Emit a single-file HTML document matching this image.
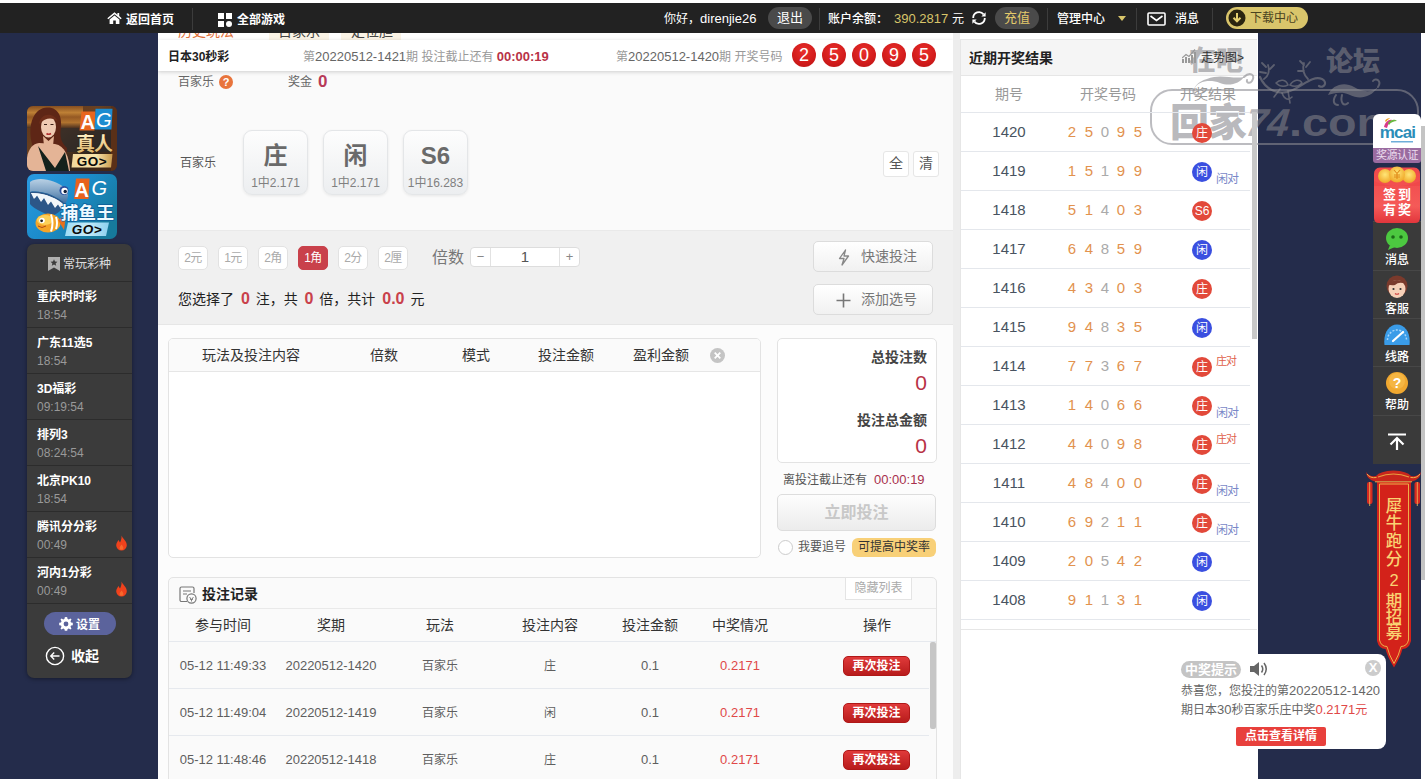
<!DOCTYPE html>
<html lang="zh-CN">
<head>
<meta charset="utf-8">
<title>日本30秒彩</title>
<style>
*{box-sizing:border-box;margin:0;padding:0}
html,body{width:1425px;height:779px;overflow:hidden}
body{background:#242c4b;font-family:"Liberation Sans","Noto Sans CJK SC",sans-serif;font-size:13px;color:#333;position:relative}
.abs{position:absolute}
#topstrip{left:0;top:0;width:1425px;height:3px;background:#fff}
#topbar{left:0;top:3px;width:1425px;height:30px;background:#222;color:#fff;font-size:13px;line-height:30px}
#topbar .t{position:absolute;top:1px;white-space:nowrap}
#topbar .sep{position:absolute;top:5px;width:1px;height:22px;background:#3c3c3c}
.pill{position:absolute;top:4px;height:22px;line-height:22px;border-radius:11px;background:#4a4a4a;text-align:center;font-size:13px}
#main{left:158px;top:33px;width:795px;height:746px;background:#fafafa;overflow:hidden}
#gap{left:953px;top:33px;width:7px;height:746px;background:#ededed}
#right{left:960px;top:33px;width:298px;height:746px;overflow:hidden}
#rightbg{left:960px;top:33px;width:298px;height:746px;background:#fff}

#main .a{position:absolute;white-space:nowrap}
#tabs{left:0;top:0;width:795px;height:8px;background:#fff;overflow:hidden}
#sticky{left:0;top:7px;width:795px;height:31px;background:#fff;box-shadow:0 1px 4px rgba(0,0,0,.18);font-size:12px;line-height:34px;z-index:5}
.ball{position:absolute;top:3px;width:24px;height:24px;border-radius:50%;background:radial-gradient(circle at 50% 35%,#e8302c 0%,#d41c1c 55%,#b81414 100%);color:#fff;font-size:18px;line-height:24px;text-align:center;font-weight:normal}
.gbtn{position:absolute;top:97px;width:65px;height:65px;border-radius:9px;border:1px solid #e4e6e8;background:linear-gradient(#fdfdfd,#eceef0);box-shadow:0 1px 3px rgba(0,0,0,.08);text-align:center;color:#666}
.gbtn b{display:block;font-size:24px;line-height:30px;margin-top:10px;font-weight:bold;color:#6a6a6a}
.gbtn i{display:block;font-style:normal;font-size:12px;line-height:14px;margin-top:5px;color:#808080}
.sq{position:absolute;top:118px;width:26px;height:26px;border:1px solid #e6e6e6;border-radius:3px;background:#fff;font-size:14px;line-height:23px;text-align:center;color:#555}
#gray{left:0;top:197px;width:795px;height:95px;background:#f0f0f0;border-top:1px solid #e9e9e9;border-bottom:1px solid #e6e6e6}
.unit{position:absolute;top:15px;width:30px;height:24px;border:1px solid #e2e2e2;border-radius:5px;background:#fff;color:#aaa;font-size:12px;line-height:22px;text-align:center;letter-spacing:-0.5px}
.unit.on{background:#c9414b;border-color:#c9414b;color:#fff}
.bbtn{position:absolute;left:655px;width:120px;height:31px;border:1px solid #dcdcdc;border-radius:5px;background:linear-gradient(#fff,#f1f1f1);color:#777;font-size:14px;line-height:29px;padding-left:47px}
#lower{left:0;top:292px;width:795px;height:454px;background:#fcfcfc}
.box{position:absolute;border:1px solid #e3e3e3;border-radius:5px;background:#fff}
.th{position:absolute;font-size:14px;color:#333;white-space:nowrap;transform:translateX(-50%)}
.td{position:absolute;font-size:13px;line-height:16px;color:#5e5e5e;white-space:nowrap;transform:translateX(-50%)}
.td.k{font-size:12px;margin-top:0}
.again{position:absolute;left:674px;width:67px;height:20px;border-radius:5px;background:linear-gradient(#e03a3a,#b81c1c);border:1px solid #b01818;color:#fff;font-size:12px;font-weight:bold;line-height:18px;text-align:center}
.n{color:#c9414b;font-size:16px;font-weight:bold;margin:0 2px 0 3px}

#right .a{position:absolute;white-space:nowrap}
.rrow{position:absolute;left:0;width:290px;height:39px;border-bottom:1px solid #e4e7ec}
.rrow .no{position:absolute;left:49px;top:9px;transform:translateX(-50%);font-size:15px;line-height:20px;color:#485360}
.rrow .d{position:absolute;top:9px;width:16px;text-align:center;font-size:15px;line-height:20px;color:#e2924e}
.rrow .d.g{color:#aaa}
.rrow .c{position:absolute;left:232px;top:10px;width:20px;height:20px;border-radius:50%;color:#fff;font-size:12px;line-height:20px;text-align:center}
.c.r{background:#e2493a}.c.b{background:#3a4fe0}
.xd{position:absolute;left:256px;top:20px;font-size:12px;line-height:14px;color:#7a88c8;letter-spacing:-1px}
.zd{position:absolute;left:256px;top:8px;font-size:11px;line-height:12px;color:#e0604a;letter-spacing:-1px}

#lmenu{left:27px;top:244px;width:105px;height:434px;background:#3b3b3b;border-radius:7px;overflow:hidden;box-shadow:0 1px 4px rgba(0,0,0,.4)}
#lmenu .a{position:absolute;white-space:nowrap}
.li{position:absolute;left:0;width:105px;height:46px;border-top:1px solid #2c2c2c}
.li b{position:absolute;left:10px;top:7px;font-size:12px;line-height:16px;color:#fff;font-weight:bold}
.li i{position:absolute;left:10px;top:25px;font-size:12px;line-height:16px;color:#999;font-style:normal}
.fire{position:absolute;left:88px;top:23px}
#rside{left:1373px;top:114px;width:48px;height:351px}
#rside .a{position:absolute;white-space:nowrap}
.rs{position:absolute;left:0;width:48px;height:49px;background:#3a3a3a;border-top:1px solid #474747;color:#fff;font-size:12px;text-align:center}
.rs span{position:absolute;left:0;width:48px;top:31px;line-height:14px;font-weight:500}
</style>
</head>
<body>
<div id="topstrip" class="abs"></div>
<div id="topbar" class="abs">
<svg class="abs" style="left:107px;top:9px" width="15" height="12" viewBox="0 0 15 12"><path d="M7.5 0.3 L0.3 6.2 L1.3 7.3 L7.5 2.3 L13.7 7.3 L14.7 6.2 L12.2 4.1 V1 H10.4 V2.7 Z" fill="#fff"/><path d="M7.5 3.4 L2.6 7.4 V12 H6.2 V8.6 H8.8 V12 H12.4 V7.4 Z" fill="#fff"/></svg>
<span class="t" style="left:126px;top:2px;font-weight:bold;font-size:12px">返回首页</span>
<div class="sep" style="left:192px"></div>
<svg class="abs" style="left:218px;top:10px" width="14" height="14" viewBox="0 0 14 14"><rect x="0" y="0" width="6" height="6" fill="#fff"/><rect x="8" y="0" width="6" height="6" fill="#fff"/><rect x="0" y="8" width="6" height="6" fill="#fff"/><circle cx="11" cy="11" r="3" fill="#fff"/></svg>
<span class="t" style="left:237px;top:2px;font-weight:bold;font-size:12px">全部游戏</span>
<span class="t" style="left:664px;font-size:12px">你好，<span style="font-size:13px">direnjie26</span></span>
<div class="pill" style="left:768px;width:44px">退出</div>
<div class="sep" style="left:819px"></div>
<span class="t" style="left:828px;font-size:12px;font-weight:500">账户余额：</span>
<span class="t" style="left:894px;font-size:13px;color:#d8c56a">390.2817</span>
<span class="t" style="left:952px;font-size:12px">元</span>
<svg class="abs" style="left:971px;top:7px" width="16" height="16" viewBox="0 0 16 16"><path d="M2.2 8 A5.8 5.8 0 0 1 12.6 4.4" fill="none" stroke="#fff" stroke-width="1.8"/><path d="M13.8 8 A5.8 5.8 0 0 1 3.4 11.6" fill="none" stroke="#fff" stroke-width="1.8"/><path d="M14.6 2.2 V6.4 H10.4 Z" fill="#fff"/><path d="M1.4 13.8 V9.6 H5.6 Z" fill="#fff"/></svg>
<div class="pill" style="left:995px;width:44px;color:#e4c96a">充值</div>
<div class="sep" style="left:1047px"></div>
<span class="t" style="left:1057px;font-size:12px;font-weight:500">管理中心</span>
<div class="abs" style="left:1118px;top:13px;width:0;height:0;border-left:4px solid transparent;border-right:4px solid transparent;border-top:5px solid #d8c56a"></div>
<div class="sep" style="left:1136px"></div>
<svg class="abs" style="left:1147px;top:9px" width="19" height="14" viewBox="0 0 19 14"><rect x="1" y="1" width="17" height="12" rx="1" fill="none" stroke="#fff" stroke-width="1.6"/><path d="M3.5 4 L9.5 8.5 L15.5 4" fill="none" stroke="#fff" stroke-width="1.6"/></svg>
<span class="t" style="left:1175px;font-size:12px;font-weight:500">消息</span>
<div class="sep" style="left:1212px"></div>
<div class="pill" style="left:1226px;width:82px;top:4px;height:22px;line-height:22px;border-radius:11px;background:#d9c56b;color:#4a4320;font-size:12px;text-align:left;padding-left:24px">下载中心</div>
<svg class="abs" style="left:1228px;top:6px" width="18" height="18" viewBox="0 0 18 18"><circle cx="9" cy="9" r="8.5" fill="#2a2410"/><path d="M9 4 V12 M5.5 8.8 L9 12.3 L12.5 8.8" fill="none" stroke="#e4cf70" stroke-width="2"/></svg>
</div>
<div id="main" class="abs">
<div id="tabs" class="a">
 <span class="a" style="left:20px;top:-10px;font-size:14px;line-height:16px;color:#e0703a">历史玩法</span>
 <div class="a" style="left:111px;top:-12px;width:60px;height:19px;background:#fbf4e6"></div>
 <span class="a" style="left:120px;top:-10px;font-size:14px;line-height:16px;color:#444">百家乐</span>
 <div class="a" style="left:183px;top:-12px;width:60px;height:19px;background:#fbf4e6"></div>
 <span class="a" style="left:193px;top:-10px;font-size:14px;line-height:16px;color:#444">定位胆</span>
</div>
<div id="sticky" class="a">
 <span class="a" style="left:10px;font-weight:bold;color:#222">日本30秒彩</span>
 <span class="a" style="left:145px;color:#999">第<span style="color:#666;font-size:13px">20220512-1421</span>期 投注截止还有 <b style="color:#b83246;font-size:13px">00:00:19</b></span>
 <span class="a" style="left:458px;color:#999">第<span style="color:#666;font-size:13px">20220512-1420</span>期 开奖号码</span>
 <div class="ball" style="left:634px">2</div><div class="ball" style="left:664px">5</div><div class="ball" style="left:694px">0</div><div class="ball" style="left:724px">9</div><div class="ball" style="left:754px">5</div>
</div>
<span class="a" style="left:20px;top:41px;font-size:12px;line-height:16px;color:#666">百家乐</span>
<div class="a" style="left:61px;top:42px;width:14px;height:14px;border-radius:50%;background:#e8743c;color:#fff;font-size:11px;font-weight:bold;line-height:14px;text-align:center">?</div>
<span class="a" style="left:130px;top:41px;font-size:12px;line-height:16px;color:#666">奖金</span>
<span class="a" style="left:160px;top:39px;font-size:17px;line-height:20px;font-weight:bold;color:#b83a58">0</span>
<span class="a" style="left:22px;top:122px;font-size:12px;line-height:16px;color:#555">百家乐</span>
<div class="gbtn" style="left:85px"><b>庄</b><i>1中2.171</i></div>
<div class="gbtn" style="left:165px"><b>闲</b><i>1中2.171</i></div>
<div class="gbtn" style="left:245px"><b>S6</b><i>1中16.283</i></div>
<div class="sq" style="left:725px">全</div><div class="sq" style="left:755px">清</div>
<div id="gray" class="a">
 <div class="unit" style="left:20px">2元</div><div class="unit" style="left:60px">1元</div><div class="unit" style="left:100px">2角</div><div class="unit on" style="left:140px">1角</div><div class="unit" style="left:180px">2分</div><div class="unit" style="left:220px">2厘</div>
 <span class="a" style="left:274px;top:16px;font-size:16px;line-height:22px;color:#777">倍数</span>
 <div class="a" style="left:312px;top:16px;width:110px;height:20px;border:1px solid #ddd;border-radius:4px;background:#fff;font-size:13px;line-height:18px;color:#555">
   <span class="a" style="left:0;width:20px;text-align:center;border-right:1px solid #e2e2e2;color:#888">−</span>
   <span class="a" style="left:20px;width:68px;text-align:center;font-size:15px">1</span>
   <span class="a" style="left:88px;width:20px;text-align:center;border-left:1px solid #e2e2e2;color:#888">+</span>
 </div>
 <span class="a" style="left:20px;top:58px;font-size:14px;line-height:20px;color:#222">您选择了 <b class="n">0</b> 注，共 <b class="n">0</b> 倍，共计 <b class="n">0.0</b> 元</span>
 <div class="bbtn" style="top:10px">快速投注<svg style="position:absolute;left:23px;top:7px" width="14" height="17" viewBox="0 0 14 17"><path d="M8.5 1 L2.5 9.5 H7 L5 16 L11.5 7 H7 Z" fill="none" stroke="#888" stroke-width="1.3" stroke-linejoin="round"/></svg></div>
 <div class="bbtn" style="top:53px">添加选号<svg style="position:absolute;left:22px;top:8px" width="15" height="15" viewBox="0 0 15 15"><path d="M7.5 0.5 V14.5 M0.5 7.5 H14.5" stroke="#777" stroke-width="1.6"/></svg></div>
</div>
<div id="lower" class="a">
 <div class="box" style="left:10px;top:13px;width:593px;height:220px;overflow:hidden">
   <div class="a" style="left:0;top:0;width:593px;height:33px;background:#fafafa;border-bottom:1px solid #e6e6e6"></div>
   <span class="th" style="left:82px;top:5px">玩法及投注内容</span>
   <span class="th" style="left:215px;top:5px">倍数</span>
   <span class="th" style="left:307px;top:5px">模式</span>
   <span class="th" style="left:397px;top:5px">投注金额</span>
   <span class="th" style="left:492px;top:5px">盈利金额</span>
   <svg class="a" style="left:541px;top:9px" width="15" height="15" viewBox="0 0 15 15"><circle cx="7.5" cy="7.5" r="7.5" fill="#c4c4c4"/><path d="M4.7 4.7 L10.3 10.3 M10.3 4.7 L4.7 10.3" stroke="#fff" stroke-width="1.8"/></svg>
 </div>
 <div class="box" style="left:619px;top:13px;width:160px;height:125px">
   <span class="a" style="right:9px;top:8px;font-size:14px;font-weight:bold;color:#444;line-height:20px">总投注数</span>
   <span class="a" style="right:9px;top:32px;font-size:21px;color:#b83246;line-height:24px;font-weight:300">0</span>
   <span class="a" style="right:9px;top:71px;font-size:14px;font-weight:bold;color:#444;line-height:20px">投注总金额</span>
   <span class="a" style="right:9px;top:95px;font-size:21px;color:#b83246;line-height:24px;font-weight:300">0</span>
 </div>
 <span class="a" style="left:625px;top:147px;font-size:12px;line-height:16px;color:#555">离投注截止还有</span>
 <span class="a" style="left:716px;top:147px;font-size:13px;line-height:16px;color:#a8304c">00:00:19</span>
 <div class="a" style="left:619px;top:169px;width:159px;height:37px;border:1px solid #ddd;border-radius:5px;background:linear-gradient(#fdfdfd,#ececec);text-align:center;font-size:16px;font-weight:bold;color:#c8c8c8;line-height:35px">立即投注</div>
 <div class="a" style="left:620px;top:215px;width:15px;height:15px;border-radius:50%;border:1px solid #ccc;background:#fff"></div>
 <span class="a" style="left:640px;top:214px;font-size:12px;line-height:16px;color:#555">我要追号</span>
 <div class="a" style="left:694px;top:213px;width:84px;height:19px;border-radius:6px;background:#f8d078;font-size:12px;line-height:19px;text-align:center;color:#333">可提高中奖率</div>

 <div class="box" style="left:10px;top:252px;width:769px;height:220px;background:#fafafa;border-radius:5px 5px 0 0">
   <svg class="a" style="left:10px;top:8px" width="18" height="18" viewBox="0 0 18 18"><path d="M8 15.5 H2.5 A1.5 1.5 0 0 1 1 14 V2.5 A1.5 1.5 0 0 1 2.5 1 H13.5 A1.5 1.5 0 0 1 15 2.5 V7" fill="none" stroke="#777" stroke-width="1.2"/><path d="M4 5 H12 M4 8 H8" stroke="#777" stroke-width="1.2"/><circle cx="12.5" cy="12.5" r="4.6" fill="#fafafa" stroke="#777" stroke-width="1.2"/><path d="M10.6 11 L12.5 14 L14.4 11 M12.5 13.5 V15.5 M11 13.3 H14" stroke="#777" stroke-width="0.9" fill="none"/></svg>
   <span class="a" style="left:33px;top:6px;font-size:14px;font-weight:bold;color:#222;line-height:20px">投注记录</span>
   <div class="a" style="left:676px;top:-1px;width:67px;height:23px;border:1px solid #e4e4e4;background:#fff;font-size:12px;color:#aaa;text-align:center;line-height:21px">隐藏列表</div>
   <div class="a" style="left:0;top:30px;width:767px;height:1px;background:#e9e9e9"></div>
   <span class="th" style="left:54px;top:36px">参与时间</span>
   <span class="th" style="left:162px;top:36px">奖期</span>
   <span class="th" style="left:271px;top:36px">玩法</span>
   <span class="th" style="left:381px;top:36px">投注内容</span>
   <span class="th" style="left:481px;top:36px">投注金额</span>
   <span class="th" style="left:571px;top:36px">中奖情况</span>
   <span class="th" style="left:708px;top:36px">操作</span>
   <div class="a" style="left:0;top:63px;width:767px;height:1px;background:#e6e9ee"></div>
   <div class="a" style="left:0;top:110px;width:760px;height:1px;background:#e6e9ee"></div>
   <div class="a" style="left:0;top:157px;width:760px;height:1px;background:#e6e9ee"></div>
   <div class="a" style="left:761px;top:64px;width:6px;height:87px;background:#c6c6c6;border-radius:2px"></div>

   <span class="td" style="left:54px;top:80px">05-12 11:49:33</span><span class="td" style="left:162px;top:80px">20220512-1420</span><span class="td k" style="left:271px;top:80px">百家乐</span><span class="td k" style="left:381px;top:80px">庄</span><span class="td" style="left:481px;top:80px">0.1</span><span class="td" style="left:571px;top:80px;color:#e04848">0.2171</span><div class="again" style="top:78px">再次投注</div>
   <span class="td" style="left:54px;top:127px">05-12 11:49:04</span><span class="td" style="left:162px;top:127px">20220512-1419</span><span class="td k" style="left:271px;top:127px">百家乐</span><span class="td k" style="left:381px;top:127px">闲</span><span class="td" style="left:481px;top:127px">0.1</span><span class="td" style="left:571px;top:127px;color:#e04848">0.2171</span><div class="again" style="top:125px">再次投注</div>
   <span class="td" style="left:54px;top:174px">05-12 11:48:46</span><span class="td" style="left:162px;top:174px">20220512-1418</span><span class="td k" style="left:271px;top:174px">百家乐</span><span class="td k" style="left:381px;top:174px">庄</span><span class="td" style="left:481px;top:174px">0.1</span><span class="td" style="left:571px;top:174px;color:#e04848">0.2171</span><div class="again" style="top:172px">再次投注</div>
 </div>
</div>
</div>

<svg class="abs" id="ag1" style="left:27px;top:106px" width="90" height="65" viewBox="0 0 90 65">
 <defs>
  <linearGradient id="bg1" x1="0" y1="0" x2="1" y2="1"><stop offset="0" stop-color="#5a3418"/><stop offset=".4" stop-color="#6a4020"/><stop offset=".7" stop-color="#32261c"/><stop offset="1" stop-color="#4a2a16"/></linearGradient>
  <linearGradient id="gold" x1="0" y1="0" x2="0" y2="1"><stop offset="0" stop-color="#fff4cc"/><stop offset="1" stop-color="#dcb060"/></linearGradient>
  <linearGradient id="goldbar" x1="0" y1="0" x2="1" y2="0"><stop offset="0" stop-color="#f2d89c"/><stop offset=".6" stop-color="#f8e4ac"/><stop offset="1" stop-color="#c89a4c"/></linearGradient>
  <linearGradient id="band" x1="0" y1="0" x2="0" y2="1"><stop offset="0" stop-color="#8a5020"/><stop offset=".3" stop-color="#c88838"/><stop offset=".5" stop-color="#9a5c24"/><stop offset=".75" stop-color="#b87830"/><stop offset="1" stop-color="#4a3020"/></linearGradient>
  <clipPath id="cp1"><rect width="90" height="65" rx="6"/></clipPath>
 </defs>
 <g clip-path="url(#cp1)">
  <rect width="90" height="65" fill="url(#bg1)"/>
  <rect x="0" y="0" width="56" height="22" fill="url(#band)" opacity=".9"/>
  <rect x="30" y="22" width="60" height="24" fill="#2c2a2a" opacity=".75"/>
  <rect x="84" y="0" width="6" height="65" fill="#5a3018"/>
  <path d="M5 38 C0 16 8 2 20 1.500 C32 1 36 12 33.500 26 C33 34 36 38 40 42 L38 65 H0 C2 52 6 46 5 38 Z" fill="#5e2616"/>
  <path d="M0 65 C-2 46 4 38 12 37 L28 38 C38 40 42 50 43 65 Z" fill="#e4b496"/>
  <ellipse cx="21.500" cy="21" rx="7.500" ry="10.500" fill="#efcab2"/>
  <path d="M12 18 C13 7 27 5 31 16 C27 12 20 10 12 18 Z" fill="#6e2e1a"/>
  <path d="M16 30 L21.500 35 L27 30 L26 40 H17 Z" fill="#e4b496"/>
  <path d="M11 40 L19 65 H42 L38 46 L28 62 Z" fill="#14221c"/>
  <path d="M19.500 27.500 Q21.500 29 24 27.500" stroke="#b03030" stroke-width="1.600" fill="none"/>
  <path d="M17 18.500 H20 M23.500 18.500 H26.500" stroke="#3a2018" stroke-width="1.200"/>
  <path d="M54.500 5.500 H68.500 L67.500 24.500 H52.500 Z" fill="#e8661e"/><path d="M68.500 2.700 H85.500 L84.500 23.500 H67.500 Z" fill="#1c8cd0"/>
  <g font-family="Liberation Sans, sans-serif" font-weight="bold" font-size="20" fill="#fff"><text x="53.500" y="22.500">A</text><text x="69" y="21" font-style="italic" font-weight="normal">G</text></g>
  <text x="67" y="44.500" font-family="Liberation Sans, Noto Sans CJK SC, sans-serif" font-weight="bold" font-size="19" fill="url(#gold)" stroke="#2a1808" stroke-width=".8" text-anchor="middle" paint-order="stroke" letter-spacing="-1">真人</text>
  <path d="M46 48 H85.500 L84 61.500 H44.500 Z" fill="url(#goldbar)"/>
  <text x="65" y="59.500" font-family="Liberation Sans, sans-serif" font-weight="bold" font-size="13.500" fill="#0a0a0a" text-anchor="middle" letter-spacing=".5">GO&gt;</text>
 </g>
</svg>
<svg class="abs" id="ag2" style="left:27px;top:174px" width="90" height="65" viewBox="0 0 90 65">
 <defs>
  <linearGradient id="bg2" x1="0" y1="0" x2="1" y2=".6"><stop offset="0" stop-color="#2a9ae0"/><stop offset=".5" stop-color="#1c8ccc"/><stop offset="1" stop-color="#167a9c"/></linearGradient>
  <linearGradient id="bluebar" x1="0" y1="0" x2="1" y2="0"><stop offset="0" stop-color="#a0dcf4"/><stop offset=".5" stop-color="#c4ecfa"/><stop offset="1" stop-color="#8cd0ee"/></linearGradient>
  <linearGradient id="shark" x1="0" y1="0" x2="0" y2="1"><stop offset="0" stop-color="#b8d0e4"/><stop offset=".5" stop-color="#7ea2c4"/><stop offset="1" stop-color="#3a6a9c"/></linearGradient>
  <clipPath id="cp2"><rect width="90" height="65" rx="7"/></clipPath>
 </defs>
 <g clip-path="url(#cp2)">
  <rect width="90" height="65" fill="url(#bg2)"/>
  <path d="M3 8 C12 2 28 6 38 14 C42 18 42 24 38 30 C30 22 14 16 3 18 Z" fill="url(#shark)"/>
  <path d="M3 18 C14 16 30 22 38 30 C36 36 30 40 24 42 C14 38 6 34 3 30 Z" fill="#2c5688"/>
  <path d="M4 19 L8 24 L11 20 L15 26 L18 22 L22 29 L25 25 L29 32 L32 28 L35 33 L37 30 L37 31 C30 24 15 18 4 20 Z" fill="#eef4f8"/>
  <path d="M4 19 L7 25 L10 21.500 L14 28 L17 24 L21 31 L24 27.500 L28 34 L31 30.500 L34 35 L37 31 C30 24 15 18 4 19 Z" fill="#f2f6fa"/>
  <circle cx="37" cy="16.500" r="4.500" fill="#2a50a0"/><circle cx="37.500" cy="17" r="3.200" fill="#fff"/><circle cx="38.200" cy="17.500" r="1.700" fill="#14203a"/>
  <ellipse cx="21" cy="49" rx="12.500" ry="9.500" fill="#f4a428"/>
  <ellipse cx="18" cy="46" rx="8" ry="5" fill="#fcd058"/>
  <path d="M31 46 L39 41 L37 56 Z" fill="#e8701c"/>
  <path d="M24 40.500 Q27 49 24 57.500 M29 43 Q31 49 29 55" stroke="#fff" stroke-width="2" fill="none"/>
  <circle cx="15" cy="46.500" r="2.800" fill="#fff"/><circle cx="14.600" cy="46.800" r="1.400" fill="#222"/>
  <path d="M11 52 Q15 55 19 52" stroke="#b04818" stroke-width="1" fill="none"/>
  <path d="M49 4.500 H62.500 L61.500 25 H47 Z" fill="#e8621c"/>
  <g font-family="Liberation Sans, sans-serif" font-size="20" fill="#fff"><text x="47.500" y="23" font-weight="bold">A</text><text x="64.500" y="20.500" font-style="italic">G</text></g>
  <text x="60.500" y="45" font-family="Liberation Sans, Noto Sans CJK SC, sans-serif" font-weight="bold" font-size="17.500" fill="#eefaff" stroke="#0c5c98" stroke-width="1.400" text-anchor="middle" paint-order="stroke" letter-spacing=".3">捕鱼王</text>
  <path d="M41 48.500 H82 L79 62 H38 Z" fill="url(#bluebar)"/>
  <text x="60" y="60" font-family="Liberation Sans, sans-serif" font-weight="bold" font-style="italic" font-size="13.500" fill="#0a0a0a" text-anchor="middle" letter-spacing=".5">GO&gt;</text>
 </g>
</svg>
<div class="abs" id="lmenu">
 <svg class="a" style="left:21px;top:13px" width="12" height="14" viewBox="0 0 12 14"><path d="M0 0 H12 V14 L6 10.5 L0 14 Z" fill="#b0b0b0"/><path d="M6 2.2 L7 4.6 L9.4 4.8 L7.6 6.4 L8.2 8.8 L6 7.5 L3.8 8.8 L4.4 6.4 L2.6 4.8 L5 4.6 Z" fill="#3b3b3b"/></svg>
 <span class="a" style="left:36px;top:11px;font-size:12px;line-height:18px;color:#ddd">常玩彩种</span>
<div class="li" style="top:37px"><b>重庆时时彩</b><i>18:54</i></div>
<div class="li" style="top:83px"><b>广东11选5</b><i>18:54</i></div>
<div class="li" style="top:129px"><b>3D福彩</b><i>09:19:54</i></div>
<div class="li" style="top:175px"><b>排列3</b><i>08:24:54</i></div>
<div class="li" style="top:221px"><b>北京PK10</b><i>18:54</i></div>
<div class="li" style="top:267px"><b>腾讯分分彩</b><i>00:49</i><svg class="fire" width="13" height="16" viewBox="0 0 13 16"><path d="M6.5 0.5 C7.5 3.5 11.8 6 11.8 10.2 A5.3 5.3 0 0 1 1.2 10.2 C1.2 8 2.6 6.8 3.4 5 C4.2 6.2 4.6 6.8 5 7.6 C6 5.4 6.8 3.2 6.5 0.5 Z" fill="#f0421c"/><path d="M6.5 9.5 C7.2 10.8 8.4 11.4 8.4 12.9 A1.9 1.9 0 0 1 4.6 12.9 C4.6 11.700 5.800 11 6.500 9.500 Z" fill="#f8682c"/></svg></div>
<div class="li" style="top:313px"><b>河内1分彩</b><i>00:49</i><svg class="fire" width="13" height="16" viewBox="0 0 13 16"><path d="M6.5 0.5 C7.5 3.5 11.8 6 11.8 10.2 A5.3 5.3 0 0 1 1.2 10.2 C1.2 8 2.6 6.8 3.4 5 C4.2 6.2 4.6 6.8 5 7.6 C6 5.4 6.8 3.2 6.5 0.5 Z" fill="#f0421c"/><path d="M6.5 9.5 C7.2 10.8 8.4 11.4 8.4 12.9 A1.9 1.9 0 0 1 4.6 12.9 C4.6 11.700 5.800 11 6.500 9.500 Z" fill="#f8682c"/></svg></div>

 <div class="a" style="left:0;top:359px;width:105px;height:1px;background:#2c2c2c"></div>
 <div class="a" style="left:17px;top:368px;width:72px;height:23px;border-radius:12px;background:#5b639c;color:#fff;font-size:12px;font-weight:bold;line-height:26px;padding-left:32px;overflow:hidden">设置</div>
 <svg class="a" style="left:32px;top:373px" width="14" height="14" viewBox="0 0 14 14"><path d="M7 0 L8.2 0.2 L8.6 2 L9.8 2.5 L11.4 1.5 L12.5 2.6 L11.5 4.2 L12 5.4 L13.8 5.8 V8.2 L12 8.6 L11.5 9.8 L12.5 11.4 L11.4 12.5 L9.8 11.5 L8.6 12 L8.2 13.8 H5.8 L5.4 12 L4.2 11.5 L2.6 12.5 L1.5 11.4 L2.5 9.8 L2 8.6 L0.2 8.2 V5.8 L2 5.4 L2.5 4.2 L1.5 2.6 L2.6 1.5 L4.2 2.5 L5.4 2 L5.8 0.2 Z" fill="#fff"/><circle cx="7" cy="7" r="2.4" fill="#5b639c"/></svg>
 <svg class="a" style="left:18px;top:402px" width="20" height="20" viewBox="0 0 20 20"><circle cx="10" cy="10" r="8.6" fill="none" stroke="#fff" stroke-width="1.4"/><path d="M14.5 10 H6 M9.2 6.6 L5.8 10 L9.2 13.4" fill="none" stroke="#fff" stroke-width="1.4"/></svg>
 <span class="a" style="left:44px;top:402px;font-size:14px;font-weight:bold;line-height:20px;color:#fff">收起</span>
</div>
<div id="gap" class="abs"></div>
<div id="rightbg" class="abs"><div class="abs" style="left:0;top:6px;width:297px;height:37px;background:#f5f5f5;border-top:1px solid #e6e6e6;border-bottom:1px solid #e6e6e6;border-left:1px solid #e6e6e6"></div></div>
<div class="abs" id="wm" style="left:1150px;top:40px;width:271px;height:110px;pointer-events:none;color:rgba(132,132,138,.58);font-weight:900;overflow:hidden">
 <span class="abs" style="left:39px;top:5px;font-size:27px;line-height:32px;white-space:nowrap">在吧</span>
 <span class="abs" style="left:176px;top:6px;font-size:27px;line-height:32px;white-space:nowrap">论坛</span>
 <svg class="abs" style="left:40px;top:17px" width="230" height="60" viewBox="0 0 230 60" fill="none" stroke="rgba(132,132,138,.58)" stroke-linecap="round" stroke-linejoin="round">
  <path d="M4 32 C8 24 20 22 30 26 C40 30 50 26 54 20 C44 22 34 18 24 20 C14 22 6 26 4 32 Z" fill="rgba(132,132,138,.58)" stroke="none"/>
  <path d="M54 20 C60 14 66 18 62 24 C60 27 56 26 57 23 M4 32 C2 36 6 40 9 37" stroke-width="2"/>
  <path d="M70 20 C76 34 90 38 100 34 C112 30 122 18 132 22 C138 25 134 32 129 29" stroke-width="2.200"/>
  <path d="M78 8 C80 14 78 20 74 22 M76 10 L72 6 M80 12 L84 8 M76 16 L70 15" stroke-width="1.800"/>
  <path d="M114 6 C112 12 114 18 118 22 M114 8 L110 4 M116 10 L120 5 M114 14 L108 14" stroke-width="1.800"/>
  <path d="M86 26 C90 22 96 22 98 28 C94 30 90 30 86 26 Z M100 28 C104 22 110 22 112 26 C108 30 104 30 100 28 Z M92 36 C94 42 98 44 102 40 M98 34 L100 46 M90 32 L84 40" stroke-width="1.600"/>
  <path d="M138 38 C142 28 154 24 164 30 C172 35 182 36 188 30 C180 42 168 42 160 38 C152 34 144 36 138 38 Z" fill="rgba(132,132,138,.58)" stroke="none"/>
  <path d="M188 30 C192 24 186 20 183 24 M152 38 C150 46 154 50 158 46 M146 38 C142 44 144 48 148 48" stroke-width="2"/>
 </svg>
 <div class="abs" style="left:0;top:49px;width:269px;height:56px;border:2px solid rgba(140,140,146,.58);border-radius:22px"></div>
 <span class="abs" style="left:20px;top:60px;font-size:39px;line-height:46px;white-space:nowrap;letter-spacing:-1px">回家<i style="letter-spacing:0;display:inline-block;transform:skewX(-6deg)">74</i><span style="display:inline-block;transform:scaleX(1.2);transform-origin:0 50%;letter-spacing:0">.com</span></span>
</div>
<div id="right" class="abs">
<span class="a" style="left:9px;top:15px;font-size:14px;font-weight:bold;color:#222;line-height:20px">近期开奖结果</span>
<svg class="a" style="left:222px;top:16px" width="18" height="14" viewBox="0 0 18 14"><path d="M0 14 V10 H2 V14 M3 14 V8 H5 V14 M6 14 V9 H8 V14 M9 14 V6 H11 V14 M12 14 V3 H14 V14" fill="#999"/><path d="M0 9 L4 5.500 L7 7.500 L13 0.500" stroke="#999" stroke-width="1.200" fill="none"/></svg>
<span class="a" style="left:241px;top:15px;font-size:12px;color:#333;line-height:20px">走势图&gt;</span>
<span class="a" style="left:49px;top:51px;transform:translateX(-50%);font-size:14px;color:#999;line-height:20px">期号</span>
<span class="a" style="left:148px;top:51px;transform:translateX(-50%);font-size:14px;color:#999;line-height:20px">开奖号码</span>
<span class="a" style="left:248px;top:51px;transform:translateX(-50%);font-size:14px;color:#999;line-height:20px">开奖结果</span>
<div class="a" style="left:0;top:79px;width:290px;height:1px;background:#e4e7ec"></div>
<div class="rrow" style="top:80px"><span class="no">1420</span><span class="d" style="left:104px">2</span><span class="d" style="left:121px">5</span><span class="d g" style="left:137px">0</span><span class="d" style="left:153px">9</span><span class="d" style="left:170px">5</span><span class="c r">庄</span></div>
<div class="rrow" style="top:119px"><span class="no">1419</span><span class="d" style="left:104px">1</span><span class="d" style="left:121px">5</span><span class="d g" style="left:137px">1</span><span class="d" style="left:153px">9</span><span class="d" style="left:170px">9</span><span class="c b">闲</span><span class="xd">闲对</span></div>
<div class="rrow" style="top:158px"><span class="no">1418</span><span class="d" style="left:104px">5</span><span class="d" style="left:121px">1</span><span class="d g" style="left:137px">4</span><span class="d" style="left:153px">0</span><span class="d" style="left:170px">3</span><span class="c r">S6</span></div>
<div class="rrow" style="top:197px"><span class="no">1417</span><span class="d" style="left:104px">6</span><span class="d" style="left:121px">4</span><span class="d g" style="left:137px">8</span><span class="d" style="left:153px">5</span><span class="d" style="left:170px">9</span><span class="c b">闲</span></div>
<div class="rrow" style="top:236px"><span class="no">1416</span><span class="d" style="left:104px">4</span><span class="d" style="left:121px">3</span><span class="d g" style="left:137px">4</span><span class="d" style="left:153px">0</span><span class="d" style="left:170px">3</span><span class="c r">庄</span></div>
<div class="rrow" style="top:275px"><span class="no">1415</span><span class="d" style="left:104px">9</span><span class="d" style="left:121px">4</span><span class="d g" style="left:137px">8</span><span class="d" style="left:153px">3</span><span class="d" style="left:170px">5</span><span class="c b">闲</span></div>
<div class="rrow" style="top:314px"><span class="no">1414</span><span class="d" style="left:104px">7</span><span class="d" style="left:121px">7</span><span class="d g" style="left:137px">3</span><span class="d" style="left:153px">6</span><span class="d" style="left:170px">7</span><span class="c r">庄</span><span class="zd">庄对</span></div>
<div class="rrow" style="top:353px"><span class="no">1413</span><span class="d" style="left:104px">1</span><span class="d" style="left:121px">4</span><span class="d g" style="left:137px">0</span><span class="d" style="left:153px">6</span><span class="d" style="left:170px">6</span><span class="c r">庄</span><span class="xd">闲对</span></div>
<div class="rrow" style="top:392px"><span class="no">1412</span><span class="d" style="left:104px">4</span><span class="d" style="left:121px">4</span><span class="d g" style="left:137px">0</span><span class="d" style="left:153px">9</span><span class="d" style="left:170px">8</span><span class="c r">庄</span><span class="zd">庄对</span></div>
<div class="rrow" style="top:431px"><span class="no">1411</span><span class="d" style="left:104px">4</span><span class="d" style="left:121px">8</span><span class="d g" style="left:137px">4</span><span class="d" style="left:153px">0</span><span class="d" style="left:170px">0</span><span class="c r">庄</span><span class="xd">闲对</span></div>
<div class="rrow" style="top:470px"><span class="no">1410</span><span class="d" style="left:104px">6</span><span class="d" style="left:121px">9</span><span class="d g" style="left:137px">2</span><span class="d" style="left:153px">1</span><span class="d" style="left:170px">1</span><span class="c r">庄</span><span class="xd">闲对</span></div>
<div class="rrow" style="top:509px"><span class="no">1409</span><span class="d" style="left:104px">2</span><span class="d" style="left:121px">0</span><span class="d g" style="left:137px">5</span><span class="d" style="left:153px">4</span><span class="d" style="left:170px">2</span><span class="c b">闲</span></div>
<div class="rrow" style="top:548px"><span class="no">1408</span><span class="d" style="left:104px">9</span><span class="d" style="left:121px">1</span><span class="d g" style="left:137px">1</span><span class="d" style="left:153px">3</span><span class="d" style="left:170px">1</span><span class="c b">闲</span></div>

<div class="a" style="left:0;top:596px;width:297px;height:1px;background:#e6e6e6"></div>
<div class="a" style="left:292px;top:79px;width:5px;height:227px;background:#c8c8c8"></div>
<div class="a" style="left:0;top:6px;width:1px;height:740px;background:#e6e6e6"></div>
</div>

<div class="abs" id="rside">
 <div class="a" style="left:0;top:0;width:48px;height:34px;background:#fff;border-radius:6px 6px 0 0"></div>
 <svg class="a" style="left:0;top:0" width="48" height="34" viewBox="0 0 48 34"><path d="M11 13 C12 8 16 5 19 6 C17 8 15 10 14 14 Z" fill="#d83a8a"/><path d="M15 9 C18 5 22 5 24 7 C21 7 18 8 16 11 Z" fill="#6ab840"/><path d="M12 7 C13 5 15 4 17 4.500 C15 5.500 14 6.500 13 8 Z" fill="#f0a020"/><text x="24.500" y="24" font-family="Liberation Sans, sans-serif" font-weight="bold" font-size="17" fill="#2b8db8" text-anchor="middle" letter-spacing="-.8">mcai</text><rect x="18" y="27" width="22" height="1.500" fill="#4a9ad0" opacity=".8"/></svg>
 <div class="a" style="left:0;top:34px;width:48px;height:15px;background:#9a6ca0;color:#ecdcee;font-size:11px;line-height:15px;text-align:center;letter-spacing:-0.5px;border-radius:0 0 3px 3px">奖源认证</div>
 <svg class="a" style="left:0;top:50px;z-index:2" width="48" height="60" viewBox="0 0 48 60">
  <defs><linearGradient id="env" x1="0" y1="0" x2="0" y2="1"><stop offset="0" stop-color="#f0484a"/><stop offset=".7" stop-color="#f55a58"/><stop offset="1" stop-color="#e2363c"/></linearGradient>
  <radialGradient id="coin" cx=".5" cy=".4" r=".6"><stop offset="0" stop-color="#ffe678"/><stop offset="1" stop-color="#f0a828"/></radialGradient></defs>
  <path d="M1 10 Q1 4 7 3.500 L41 3.500 Q47 4 47 10 V54 Q47 59 42 59 H6 Q1 59 1 54 Z" fill="url(#env)"/>
  <circle cx="12" cy="12" r="7" fill="url(#coin)"/><circle cx="36" cy="12" r="7" fill="url(#coin)"/><circle cx="24" cy="10.500" r="8" fill="url(#coin)"/>
  <path d="M21 6 L24 9.500 L27 6 M24 9.500 V15 M21 11 H27 M21 13 H27" stroke="#e08a18" stroke-width="1.100" fill="none"/>
  <path d="M1 17 Q24 27 47 17 V22 H1 Z" fill="#f0484a"/>
 </svg>
 <span class="a" style="left:1px;top:74px;z-index:3;width:48px;text-align:center;font-size:13px;line-height:14.500px;color:#fff;font-weight:bold;white-space:normal;letter-spacing:2px">签到<br>有奖</span>
 <div class="rs" style="top:107px"><svg style="position:absolute;left:12px;top:5px" width="24" height="24" viewBox="0 0 24 24"><ellipse cx="12" cy="11" rx="11" ry="10" fill="#4cc840"/><path d="M5 18 L3 23 L10 20 Z" fill="#4cc840"/><circle cx="8" cy="10" r="1.8" fill="#1c6a18"/><circle cx="16" cy="10" r="1.8" fill="#1c6a18"/></svg><span>消息</span></div>
 <div class="rs" style="top:156px"><svg style="position:absolute;left:12px;top:4px" width="24" height="25" viewBox="0 0 24 25"><circle cx="12" cy="11" r="10.5" fill="#7a3a2c"/><ellipse cx="12" cy="14" rx="8.5" ry="9" fill="#f6d0b8"/><path d="M3 9 Q12 1 21 9 Q14 6 10 10 Q6 11 3 9 Z" fill="#7a3a2c"/><circle cx="8.5" cy="14" r="1.1" fill="#333"/><circle cx="15.5" cy="14" r="1.1" fill="#333"/><path d="M10 18.5 Q12 20 14 18.5" stroke="#d04040" stroke-width="1.2" fill="none"/></svg><span>客服</span></div>
 <div class="rs" style="top:204px"><svg style="position:absolute;left:11px;top:5px" width="26" height="21" viewBox="0 0 26 21"><path d="M0.500 21 C-1 9 5 0.500 13 0.500 C21 0.500 27 9 25.500 21 Z" fill="#3a9ce8"/><path d="M3.500 16 A9.500 10 0 0 1 22.500 16" fill="none" stroke="#a8d6fa" stroke-width="1.500" stroke-dasharray="2 1.500"/><path d="M9 17 L19 8" stroke="#fff" stroke-width="2.200" stroke-linecap="round"/></svg><span>线路</span></div>
 <div class="rs" style="top:252px"><svg style="position:absolute;left:13px;top:5px" width="22" height="22" viewBox="0 0 22 22"><circle cx="11" cy="11" r="11" fill="#f0a830"/><circle cx="11" cy="9" r="8" fill="#f8c050" opacity=".6"/><text x="11" y="16" font-size="14" font-weight="bold" fill="#fff" text-anchor="middle" font-family="Liberation Sans, sans-serif">?</text></svg><span>帮助</span></div>
 <div class="rs" style="top:301px;height:49px"><svg style="position:absolute;left:14px;top:17px" width="20" height="18" viewBox="0 0 20 18"><path d="M1 1.5 H19 M10 17 V5 M3.5 11.5 L10 5 L16.5 11.5" fill="none" stroke="#fff" stroke-width="2.2"/></svg></div>
</div>
<svg class="abs" id="banner" style="left:1366px;top:468px" width="55" height="201" viewBox="0 0 55 201">
 <path d="M11 14 V173 Q13 181 19.500 181 Q21.500 189 28 199.500 Q34.500 189 36.500 181 Q43 181 45 173 V14 Z" fill="#d3221a"/>
 <path d="M13.500 16 V172 Q15 178.500 21 178.500 Q23 187 28 195.500 Q33 187 35 178.500 Q41 178.500 42.500 172 V16 Z" fill="none" stroke="#eeb04a" stroke-width="1"/>
 <path d="M0 4 Q3 9 10 8 Q14 3 27.500 2.500 Q41 3 45 8 Q52 9 55 4 Q54 12 46 13.5 H9 Q1 12 0 4 Z" fill="#c8261c"/>
 <path d="M1 6 Q4 10.500 10.500 9.500 M54 6 Q51 10.500 44.500 9.500 M9 13.800 H46" stroke="#eeb04a" stroke-width="1" fill="none"/>
 <path d="M12 9 Q27.500 3 43 9" stroke="#e8a040" stroke-width="1.200" fill="none"/>
 <rect x="1" y="14" width="5.500" height="22" rx="2" fill="#d62a20"/><rect x="48.500" y="14" width="5.500" height="22" rx="2" fill="#d62a20"/>
 <path d="M3.700 14 V38 M51.300 14 V38" stroke="#f0c060" stroke-width=".8"/>
 <g font-family="Liberation Sans, Noto Sans CJK SC, sans-serif" font-size="16.5" font-weight="500" fill="#f9d272" text-anchor="middle"><text x="28" y="44.4">犀</text><text x="28" y="61.4">牛</text><text x="28" y="79.3">跑</text><text x="28" y="96.8">分</text><text x="28" y="118.4">2</text><text x="28" y="138.5">期</text><text x="28" y="154.6">招</text><text x="28" y="170.3">募</text></g>
</svg>
<div class="abs" style="left:1421px;top:33px;width:4px;height:746px;background:#fff"></div>
<div class="abs" style="left:1421px;top:126px;width:4px;height:454px;background:#c4c4c4"></div>
<div class="abs" id="popup" style="left:1172px;top:654px;width:214px;height:95px;background:#fff;border-radius:0 8px 8px 0">
 <div class="abs" style="left:9px;top:7px;width:60px;height:17px;border-radius:9px;background:#c4c4c4;color:#fff;font-size:13px;font-weight:bold;line-height:17px;text-align:center">中奖提示</div>
 <svg class="abs" style="left:78px;top:7px" width="19" height="16" viewBox="0 0 19 16"><path d="M0 5 H4 L9 1 V15 L4 11 H0 Z" fill="#666"/><path d="M11.5 4.5 Q14 8 11.5 11.5 M14 2 Q18.5 8 14 14" fill="none" stroke="#666" stroke-width="1.5"/></svg>
 <div class="abs" style="left:193px;top:6px;width:16px;height:16px;border-radius:50%;background:#ccc;color:#fff;font-size:13px;font-weight:bold;line-height:16px;text-align:center">X</div>
 <div class="abs" style="left:9px;top:28px;width:204px;font-size:12px;line-height:18.5px;color:#666;white-space:nowrap">恭喜您，您投注的第<span style="font-size:13px">20220512-1420</span><br>期日本<span style="font-size:13px">30</span>秒百家乐庄中奖<span style="color:#e04848"><span style="font-size:13px">0.2171</span>元</span></div>
 <div class="abs" style="left:64px;top:73px;width:90px;height:19px;background:#e8403c;border-radius:2px;color:#fff;font-size:12px;font-weight:bold;line-height:19px;text-align:center">点击查看详情</div>
</div>
</body>
</html>
